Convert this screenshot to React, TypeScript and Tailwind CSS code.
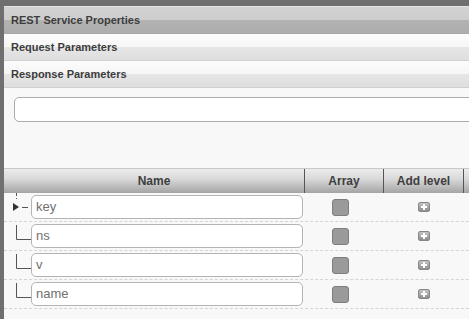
const font = { fontFamily: '"Liberation Sans", Arial, sans-serif' }

function SectionHeader({ title, active }: { title: string; active?: boolean }) {
  return (
    <div
      className={`h-[27px] flex items-center pl-[7px] text-[11px] font-bold text-[#3c3c3c] border-b ${
        active
          ? 'bg-[linear-gradient(#d2d2d2_0%,#cdcdcd_50%,#b2b2b2_52%,#adadad_100%)] border-[#a8a8a8]'
          : 'bg-[linear-gradient(#fcfcfc_0%,#f6f6f6_50%,#e6e6e6_52%,#dedede_100%)] border-[#d0d0d0]'
      }`}
    >
      {title}
    </div>
  )
}

function TreeLines({ first }: { first?: boolean }) {
  if (first) {
    return (
      <svg width="27" height="29" className="shrink-0">
        <line x1="12.5" y1="0" x2="12.5" y2="6" stroke="#555" strokeDasharray="3 2" />
        <polygon points="9,10 15,14 9,18" fill="#333" />
        <line x1="18" y1="14.5" x2="24" y2="14.5" stroke="#555" />
      </svg>
    )
  }
  return (
    <svg width="27" height="29" className="shrink-0">
      <polyline points="12.5,3 12.5,17.5 27,17.5" fill="none" stroke="#555" />
    </svg>
  )
}

function Row({ name, first }: { name: string; first?: boolean }) {
  return (
    <div className="flex h-[29px] border-b border-dashed border-[#d4d4d4]">
      <div className="w-[301px] flex items-center">
        <TreeLines first={first} />
        <div className="w-[272px] h-[24px] border border-[#b4b4b4] rounded-[5px] bg-white flex items-center px-[4px] text-[13px] text-[#707070]">
          {name}
        </div>
      </div>
      <div className="w-[79px] flex justify-center items-start pt-[6px]">
        <div className="w-[17px] h-[17px] bg-[#9a9a9a] border border-[#7e7e7e] rounded-[3px] ml-[-8px]" />
      </div>
      <div className="w-[80px] flex justify-center items-start pt-[9px]">
        <div className="w-[12px] h-[10px] rounded-[2px] bg-[linear-gradient(#c4c4c4,#8e8e8e)] border border-[#888] flex items-center justify-center">
          <svg width="6" height="6">
            <rect x="2" y="0" width="2" height="6" fill="#fff" />
            <rect x="0" y="2" width="6" height="2" fill="#fff" />
          </svg>
        </div>
      </div>
    </div>
  )
}

export default function App() {
  return (
    <div className="w-[469px] h-[319px] overflow-hidden bg-[#6f6f6f] pt-[6px] pl-[4px]" style={font}>
      <div className="w-[520px] h-[340px] bg-[#f8f8f8] border-t border-[#e4e4e4]">
        <SectionHeader title="REST Service Properties" active />
        <SectionHeader title="Request Parameters" />
        <SectionHeader title="Response Parameters" />

        <div className="pt-[9px] pl-[10px]">
          <div className="h-[25px] w-[500px] bg-white border border-[#acacac] rounded-[5px]" />
        </div>

        <div className="mt-[46px] flex h-[25px] border-t border-[#c8c8c8] bg-[linear-gradient(#ececec,#dadada_40%,#a4a4a4)] text-[12px] font-bold text-[#3e3e3e]">
          <div className="w-[301px] flex items-center justify-center border-r border-[#555]">Name</div>
          <div className="w-[79px] flex items-center justify-center border-r border-[#555]">Array</div>
          <div className="w-[80px] flex items-center justify-center border-r border-[#555]">Add level</div>
          <div className="flex-1" />
        </div>

        <Row name="key" first />
        <Row name="ns" />
        <Row name="v" />
        <Row name="name" />
      </div>
    </div>
  )
}
